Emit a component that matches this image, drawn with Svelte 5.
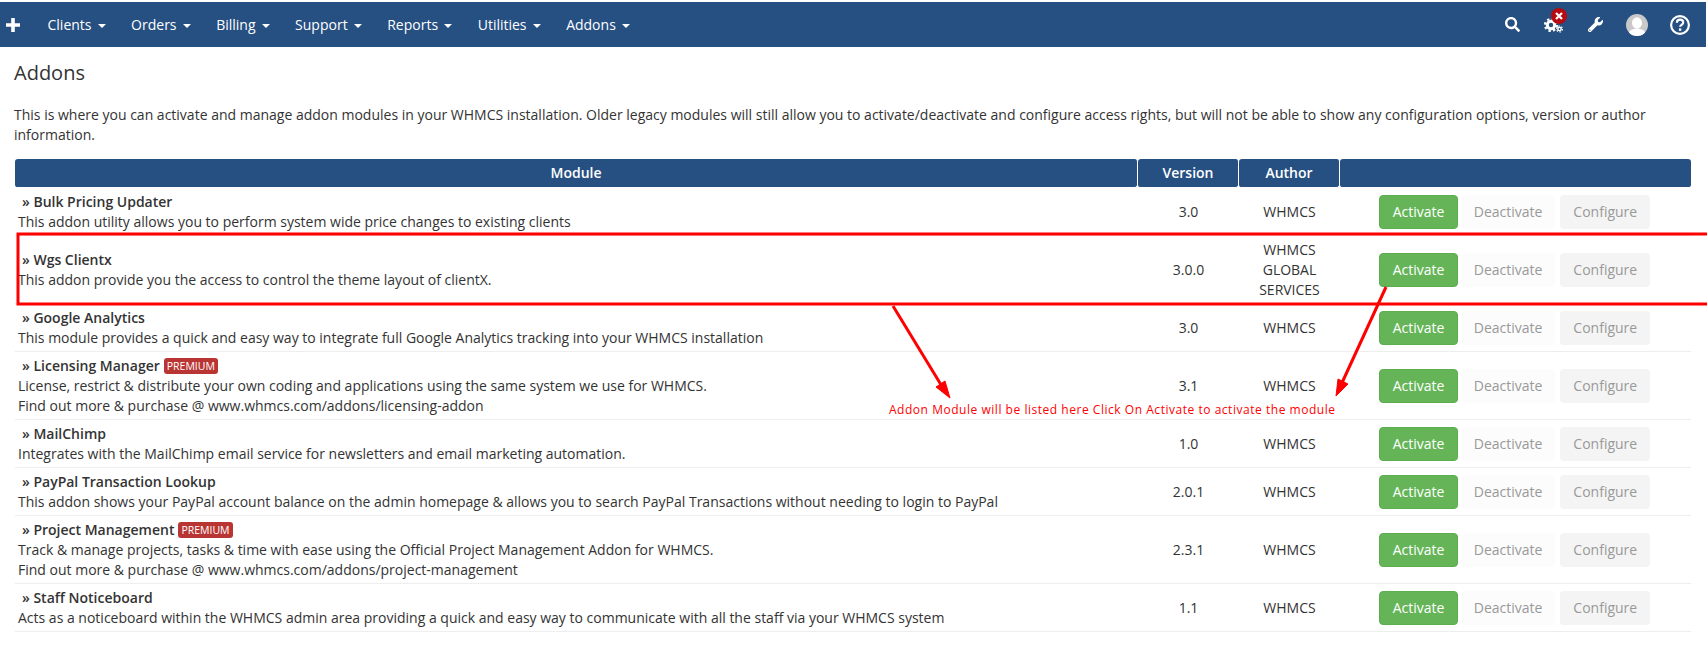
<script>
  const menu = ["Clients", "Orders", "Billing", "Support", "Reports", "Utilities", "Addons"];

  const modules = [
    { name: "Bulk Pricing Updater", lines: ["This addon utility allows you to perform system wide price changes to existing clients"], version: "3.0", author: "WHMCS" },
    { name: "Wgs Clientx", lines: ["This addon provide you the access to control the theme layout of clientX."], version: "3.0.0", author: "WHMCS GLOBAL SERVICES" },
    { name: "Google Analytics", lines: ["This module provides a quick and easy way to integrate full Google Analytics tracking into your WHMCS installation"], version: "3.0", author: "WHMCS" },
    { name: "Licensing Manager", premium: true, lines: ["License, restrict & distribute your own coding and applications using the same system we use for WHMCS.", "Find out more & purchase @ www.whmcs.com/addons/licensing-addon"], version: "3.1", author: "WHMCS" },
    { name: "MailChimp", lines: ["Integrates with the MailChimp email service for newsletters and email marketing automation."], version: "1.0", author: "WHMCS" },
    { name: "PayPal Transaction Lookup", lines: ["This addon shows your PayPal account balance on the admin homepage & allows you to search PayPal Transactions without needing to login to PayPal"], version: "2.0.1", author: "WHMCS" },
    { name: "Project Management", premium: true, lines: ["Track & manage projects, tasks & time with ease using the Official Project Management Addon for WHMCS.", "Find out more & purchase @ www.whmcs.com/addons/project-management"], version: "2.3.1", author: "WHMCS" },
    { name: "Staff Noticeboard", lines: ["Acts as a noticeboard within the WHMCS admin area providing a quick and easy way to communicate with all the staff via your WHMCS system"], version: "1.1", author: "WHMCS" }
  ];
</script>

<div class="page">
  <nav class="topbar">
    <svg class="plus" viewBox="0 0 14 14" width="14" height="14"><path d="M5.2 0h3.6v5.2H14v3.6H8.8V14H5.2V8.8H0V5.2h5.2z" fill="#fff" /></svg>
    <ul class="menu">
      {#each menu as item}
        <li>{item}<span class="caret"></span></li>
      {/each}
    </ul>
    <div class="tools">
      <svg class="search" viewBox="0 0 512 512" width="15" height="15">
        <path fill="#fff" d="M505 442.7L405.3 343c-4.5-4.5-10.6-7-17-7H372c27.6-35.3 44-79.7 44-128C416 93.1 322.9 0 208 0S0 93.1 0 208s93.1 208 208 208c48.3 0 92.7-16.4 128-44v16.3c0 6.4 2.5 12.5 7 17l99.7 99.7c9.4 9.4 24.6 9.4 33.9 0l28.3-28.3c9.4-9.4 9.4-24.6.1-34zM208 336c-70.7 0-128-57.2-128-128 0-70.7 57.2-128 128-128 70.7 0 128 57.2 128 128 0 70.7-57.2 128-128 128z" />
      </svg>
      <div class="cogs">
        <svg viewBox="0 0 20 16" width="20" height="16">
          <g fill="none" stroke="#fff">
            <circle cx="7" cy="8" r="3.7" stroke-width="3" />
            <circle cx="7" cy="8" r="5.9" stroke-width="2.4" stroke-dasharray="2.3 2.33" />
            <circle cx="15.5" cy="12" r="1.7" stroke-width="1.5" />
            <circle cx="15.5" cy="12" r="3" stroke-width="1.2" stroke-dasharray="1.5 1.64" />
          </g>
        </svg>
        <span class="badge">
          <svg viewBox="0 0 8 8" width="8" height="8"><path d="M1 1l6 6M7 1L1 7" stroke="#fff" stroke-width="2.2" /></svg>
        </span>
      </div>
      <svg class="wrench" viewBox="0 0 512 512" width="15" height="15">
        <path fill="#fff" d="M507.73 109.1c-2.24-9.03-13.54-12.09-20.12-5.51l-74.36 74.36-67.88-11.31-11.31-67.88 74.36-74.36c6.62-6.62 3.43-17.9-5.66-20.16-47.38-11.74-99.55.91-136.58 37.93-39.64 39.64-50.55 97.1-34.05 147.2L18.74 402.76c-24.99 24.99-24.99 65.51 0 90.5 24.99 24.99 65.51 24.99 90.5 0l213.21-213.21c50.12 16.71 107.47 5.68 147.37-34.22 37.07-37.07 49.7-89.32 37.91-136.73zM64 472c-13.25 0-24-10.75-24-24 0-13.26 10.75-24 24-24s24 10.74 24 24c0 13.25-10.75 24-24 24z" />
      </svg>
      <svg class="avatar" viewBox="0 0 22 22" width="22" height="22">
        <defs><clipPath id="av"><circle cx="11" cy="11" r="11" /></clipPath></defs>
        <circle cx="11" cy="11" r="11" fill="#c9c9c9" />
        <g clip-path="url(#av)" fill="#fff">
          <ellipse cx="11" cy="9" rx="5" ry="5.8" />
          <ellipse cx="11" cy="20" rx="8.5" ry="5.5" />
        </g>
      </svg>
      <svg class="help" viewBox="0 0 20 20" width="20" height="20">
        <circle cx="10" cy="10" r="8.9" fill="none" stroke="#fff" stroke-width="2.2" />
        <path d="M6.9 7.7c0-1.9 1.4-3 3.2-3 1.8 0 3.1 1.1 3.1 2.7 0 2.4-3.1 2.4-3.1 4.4" fill="none" stroke="#fff" stroke-width="2.2" />
        <rect x="8.9" y="13.4" width="2.4" height="2.4" fill="#fff" />
      </svg>
    </div>
  </nav>

  <main class="content">
    <h1>Addons</h1>
    <p class="intro">This is where you can activate and manage addon modules in your WHMCS installation. Older legacy modules will still allow you to activate/deactivate and configure access rights, but will not be able to show any configuration options, version or author information.</p>

    <table>
      <colgroup>
        <col />
        <col class="c-version" />
        <col class="c-author" />
        <col class="c-actions" />
      </colgroup>
      <thead>
        <tr>
          <th>Module</th>
          <th>Version</th>
          <th>Author</th>
          <th></th>
        </tr>
      </thead>
      <tbody>
        {#each modules as mod}
          <tr>
            <td class="info">
              <div class="name">» {mod.name}{#if mod.premium}<span class="label">PREMIUM</span>{/if}</div>
              {#each mod.lines as line}
                <div>{line}</div>
              {/each}
            </td>
            <td class="center">{mod.version}</td>
            <td class="center author">{mod.author}</td>
            <td class="actions">
              <button class="btn activate">Activate</button>
              <button class="btn deactivate">Deactivate</button>
              <button class="btn configure">Configure</button>
            </td>
          </tr>
        {/each}
      </tbody>
    </table>
  </main>

  <!-- red annotation drawn on top of the screenshot -->
  <svg class="marks" viewBox="0 0 1707 657" width="1707" height="657">
    <path d="M1707 234H18v70h1689" fill="none" stroke="#f00" stroke-width="3" />
    <path d="M893 306l50 82" stroke="#f00" stroke-width="3" fill="none" />
    <path d="M950 398l-14-11 9-6z" fill="#f00" stroke="#f00" />
    <path d="M1386 287l-45 98" stroke="#f00" stroke-width="3" fill="none" />
    <path d="M1336 396l2-17 10 5z" fill="#f00" stroke="#f00" />
  </svg>
  <span class="note">Addon Module will be listed here Click On Activate to activate the module</span>
</div>

<style>
  :global(body) {
    margin: 0;
    background: #fff;
  }

  .page {
    position: relative;
    width: 1707px;
    height: 657px;
    overflow: hidden;
    padding-top: 2px;
    box-sizing: border-box;
    font-family: "Open Sans", sans-serif;
    font-size: 14px;
    line-height: 20px;
    color: #333;
  }

  .topbar {
    display: flex;
    align-items: center;
    width: 1706px;
    height: 45px;
    background: #264f82;
    color: #fff;
  }

  .plus {
    margin-left: 6px;
    flex: none;
  }

  .menu {
    display: flex;
    list-style: none;
    margin: 0 0 0 27.5px;
    padding: 0;
  }

  .menu li {
    margin-right: 25.6px;
  }

  .caret {
    display: inline-block;
    margin-left: 6px;
    vertical-align: middle;
    border-top: 4px solid #fff;
    border-left: 4px solid transparent;
    border-right: 4px solid transparent;
  }

  .tools {
    display: flex;
    align-items: center;
    margin-left: auto;
    padding-right: 16px;
  }

  .cogs {
    position: relative;
    display: flex;
    margin-left: 24px;
  }

  .badge {
    position: absolute;
    top: -9px;
    left: 7px;
    display: flex;
    align-items: center;
    justify-content: center;
    width: 16px;
    height: 16px;
    border-radius: 50%;
    background: #b70b12;
  }

  .wrench {
    margin-left: 24px;
  }

  .avatar {
    margin-left: 23px;
  }

  .help {
    margin-left: 22px;
  }

  .content {
    padding: 0 15px 0 14px;
  }

  h1 {
    margin: 0;
    padding-top: 14px;
    font-size: 20px;
    line-height: 24px;
    font-weight: 400;
  }

  .intro {
    margin: 20px 0 0;
  }

  table {
    width: 1676px;
    margin: 14px 0 0 1px;
    border-collapse: separate;
    border-spacing: 0;
    table-layout: fixed;
  }

  .c-version {
    width: 101px;
  }

  .c-author {
    width: 101px;
  }

  .c-actions {
    width: 351px;
  }

  th {
    box-sizing: border-box;
    height: 29px;
    padding: 0;
    background: #264f82;
    color: #fff;
    font-weight: 600;
    border-radius: 3px;
    border-right: 1px solid #fff;
    border-bottom: 1px solid #fff;
  }

  th:last-child {
    border-right: 0;
  }

  td {
    box-sizing: border-box;
    height: 48px;
    padding: 4px 3px 3px;
    border-bottom: 1px solid #eee;
    vertical-align: middle;
  }

  .info {
    white-space: nowrap;
  }

  .name {
    padding-left: 4px;
    font-weight: 600;
  }

  .label {
    display: inline-block;
    margin-left: 4px;
    padding: 0 3px;
    border-radius: 3px;
    background: #b93533;
    color: #fff;
    font-size: 10.5px;
    line-height: 16px;
    font-weight: 400;
    vertical-align: 1px;
  }

  .center {
    text-align: center;
  }

  .author {
    padding: 4px 12px 3px;
  }

  .actions {
    padding-left: 39px;
    white-space: nowrap;
  }

  .btn {
    height: 34px;
    padding: 0;
    font: inherit;
    border: 1px solid transparent;
    border-radius: 4px;
  }

  .activate {
    width: 79px;
    background: #65b558;
    border-color: #5cae4f;
    color: #fff;
  }

  .deactivate {
    width: 93px;
    background: #fcfcfc;
    color: #999;
  }

  .configure {
    margin-left: 2px;
    width: 90px;
    background: #f4f4f4;
    color: #999;
  }

  .marks {
    position: absolute;
    top: 0;
    left: 0;
    pointer-events: none;
  }

  .note {
    position: absolute;
    left: 889px;
    top: 400px;
    font-family: "Open Sans", sans-serif;
    font-size: 12px;
    letter-spacing: 0.53px;
    white-space: nowrap;
    color: #f00;
  }
</style>
